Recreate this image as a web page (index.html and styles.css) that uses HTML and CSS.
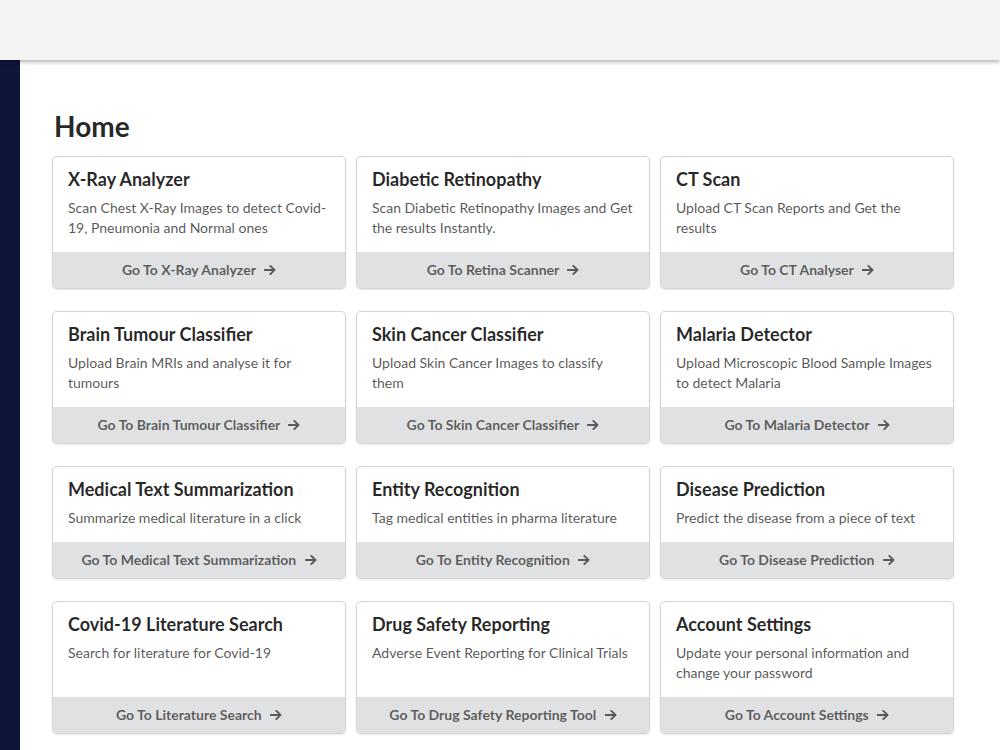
FILE: index.html
```html
<!DOCTYPE html>
<html lang="en">
<head>
    <meta charset="UTF-8">
    <meta name="viewport" content="width=device-width, initial-scale=1.0">
    <title>Home</title>
    <link rel="stylesheet" href="styles.css">
</head>
<body>
    <header class="topbar"></header>

    <div class="layout">
        <aside class="sidebar"></aside>

        <main class="main">
            <h2 class="page-title">Home</h2>

            <div class="cards">
                <div class="card">
                    <div class="content">
                        <div class="header">X-Ray Analyzer</div>
                        <div class="description">Scan Chest X-Ray Images to detect Covid-19, Pneumonia and Normal ones</div>
                    </div>
                    <a class="go-button">Go To X-Ray Analyzer <svg class="arrow" viewBox="0 0 12 10"><path d="M0.5 5H10.5M6.3 0.9L10.5 5L6.3 9.1"/></svg></a>
                </div>
                <div class="card">
                    <div class="content">
                        <div class="header">Diabetic Retinopathy</div>
                        <div class="description">Scan Diabetic Retinopathy Images and Get the results Instantly.</div>
                    </div>
                    <a class="go-button">Go To Retina Scanner <svg class="arrow" viewBox="0 0 12 10"><path d="M0.5 5H10.5M6.3 0.9L10.5 5L6.3 9.1"/></svg></a>
                </div>
                <div class="card">
                    <div class="content">
                        <div class="header">CT Scan</div>
                        <div class="description">Upload CT Scan Reports and Get the results</div>
                    </div>
                    <a class="go-button">Go To CT Analyser <svg class="arrow" viewBox="0 0 12 10"><path d="M0.5 5H10.5M6.3 0.9L10.5 5L6.3 9.1"/></svg></a>
                </div>

                <div class="card">
                    <div class="content">
                        <div class="header">Brain Tumour Classifier</div>
                        <div class="description">Upload Brain MRIs and analyse it for tumours</div>
                    </div>
                    <a class="go-button">Go To Brain Tumour Classifier <svg class="arrow" viewBox="0 0 12 10"><path d="M0.5 5H10.5M6.3 0.9L10.5 5L6.3 9.1"/></svg></a>
                </div>
                <div class="card">
                    <div class="content">
                        <div class="header">Skin Cancer Classifier</div>
                        <div class="description">Upload Skin Cancer Images to classify them</div>
                    </div>
                    <a class="go-button">Go To Skin Cancer Classifier <svg class="arrow" viewBox="0 0 12 10"><path d="M0.5 5H10.5M6.3 0.9L10.5 5L6.3 9.1"/></svg></a>
                </div>
                <div class="card">
                    <div class="content">
                        <div class="header">Malaria Detector</div>
                        <div class="description">Upload Microscopic Blood Sample Images to detect Malaria</div>
                    </div>
                    <a class="go-button">Go To Malaria Detector <svg class="arrow" viewBox="0 0 12 10"><path d="M0.5 5H10.5M6.3 0.9L10.5 5L6.3 9.1"/></svg></a>
                </div>

                <div class="card">
                    <div class="content">
                        <div class="header">Medical Text Summarization</div>
                        <div class="description">Summarize medical literature in a click</div>
                    </div>
                    <a class="go-button">Go To Medical Text Summarization <svg class="arrow" viewBox="0 0 12 10"><path d="M0.5 5H10.5M6.3 0.9L10.5 5L6.3 9.1"/></svg></a>
                </div>
                <div class="card">
                    <div class="content">
                        <div class="header">Entity Recognition</div>
                        <div class="description">Tag medical entities in pharma literature</div>
                    </div>
                    <a class="go-button">Go To Entity Recognition <svg class="arrow" viewBox="0 0 12 10"><path d="M0.5 5H10.5M6.3 0.9L10.5 5L6.3 9.1"/></svg></a>
                </div>
                <div class="card">
                    <div class="content">
                        <div class="header">Disease Prediction</div>
                        <div class="description">Predict the disease from a piece of text</div>
                    </div>
                    <a class="go-button">Go To Disease Prediction <svg class="arrow" viewBox="0 0 12 10"><path d="M0.5 5H10.5M6.3 0.9L10.5 5L6.3 9.1"/></svg></a>
                </div>

                <div class="card">
                    <div class="content">
                        <div class="header">Covid-19 Literature Search</div>
                        <div class="description">Search for literature for Covid-19</div>
                    </div>
                    <a class="go-button">Go To Literature Search <svg class="arrow" viewBox="0 0 12 10"><path d="M0.5 5H10.5M6.3 0.9L10.5 5L6.3 9.1"/></svg></a>
                </div>
                <div class="card">
                    <div class="content">
                        <div class="header">Drug Safety Reporting</div>
                        <div class="description">Adverse Event Reporting for Clinical Trials</div>
                    </div>
                    <a class="go-button">Go To Drug Safety Reporting Tool <svg class="arrow" viewBox="0 0 12 10"><path d="M0.5 5H10.5M6.3 0.9L10.5 5L6.3 9.1"/></svg></a>
                </div>
                <div class="card">
                    <div class="content">
                        <div class="header">Account Settings</div>
                        <div class="description">Update your personal information and change your password</div>
                    </div>
                    <a class="go-button">Go To Account Settings <svg class="arrow" viewBox="0 0 12 10"><path d="M0.5 5H10.5M6.3 0.9L10.5 5L6.3 9.1"/></svg></a>
                </div>
            </div>
        </main>
    </div>
</body>
</html>
```

FILE: styles.css
```css
body {
    margin: 0;
    padding: 0;
    font-family: 'Lato', 'Helvetica Neue', Arial, sans-serif;
    font-size: 14px;
    line-height: 1.4285em;
    color: rgba(0, 0, 0, 0.87);
    background: #fff;
}
.topbar {
    height: 60px;
    background: #f4f4f4;
    box-shadow: 0 2px 4px rgba(0, 0, 0, 0.3);
    position: relative;
    z-index: 2;
}
.layout {
    display: flex;
    min-height: 690px;
}
.sidebar {
    width: 20px;
    flex-shrink: 0;
    background: #0d1639;
}
.main {
    flex: 1;
    padding: 50px 0 0 33px;
}
.page-title {
    margin: 0 0 15px 1px;
    font-size: 28px;
    font-weight: 700;
    line-height: 32px;
    color: rgba(0, 0, 0, 0.87);
}
.cards {
    display: grid;
    grid-template-columns: repeat(3, 292px);
    column-gap: 12px;
    row-gap: 24px;
}
.card {
    display: flex;
    flex-direction: column;
    background: #fff;
    border-radius: 4px;
    box-shadow: 0 1px 3px 0 #d4d4d5, 0 0 0 1px #d4d4d5;
    overflow: hidden;
}
.content {
    flex: 1;
    padding: 14px 14px 14px 15px;
}
.header {
    margin-top: -3px;
    font-size: 18px;
    font-weight: 700;
    line-height: 23px;
    color: rgba(0, 0, 0, 0.85);
}
.description {
    margin-top: 7px;
    line-height: 20px;
    color: rgba(0, 0, 0, 0.68);
}
.go-button {
    display: block;
    padding: 11px 21px;
    background: #e0e1e2;
    color: rgba(0, 0, 0, 0.6);
    font-weight: 700;
    line-height: 14px;
    text-align: center;
    cursor: pointer;
}
.arrow {
    width: 12px;
    height: 10px;
    margin-left: 5px;
    vertical-align: 0;
    fill: none;
    stroke: rgba(0, 0, 0, 0.6);
    stroke-width: 1.9;
    stroke-linecap: round;
    stroke-linejoin: round;
}
```
